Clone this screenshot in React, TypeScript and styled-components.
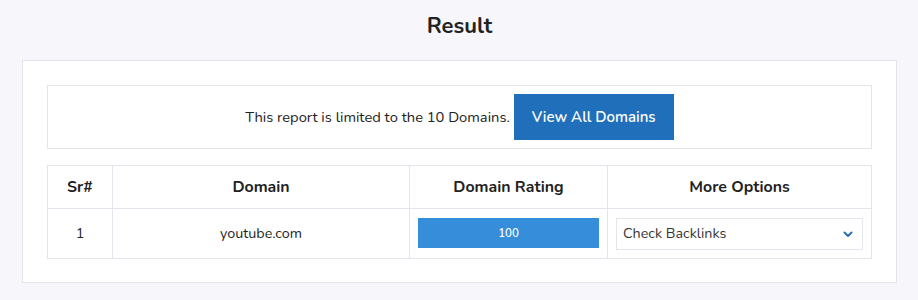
import React from "react";
import styled, { createGlobalStyle } from "styled-components";

const GlobalStyle = createGlobalStyle`
  html, body {
    margin: 0;
    padding: 0;
    background: #f7f7fb;
    font-family: "Nunito", "Open Sans", sans-serif;
    color: #222;
  }
`;

const App = () => {
  return (
    <>
      <GlobalStyle />
      <Page>
        <Title>Result</Title>
        <Card>
          <Notice>
            <NoticeText>This report is limited to the 10 Domains.</NoticeText>
            <Button>View All Domains</Button>
          </Notice>
          <Table>
            <colgroup>
              <col style={{ width: 65 }} />
              <col style={{ width: 297 }} />
              <col style={{ width: 198 }} />
              <col />
            </colgroup>
            <thead>
              <tr>
                <Th>Sr#</Th>
                <Th>Domain</Th>
                <Th>Domain Rating</Th>
                <Th>More Options</Th>
              </tr>
            </thead>
            <tbody>
              <tr>
                <Td>1</Td>
                <Td>youtube.com</Td>
                <Td>
                  <Bar>100</Bar>
                </Td>
                <Td>
                  <Select>
                    <span>Check Backlinks</span>
                    <svg width="12" height="12" viewBox="0 0 12 12">
                      <path
                        d="M2.5 4.5 L6 8 L9.5 4.5"
                        fill="none"
                        stroke="#2a6fb8"
                        strokeWidth="2"
                        strokeLinecap="round"
                        strokeLinejoin="round"
                      />
                    </svg>
                  </Select>
                </Td>
              </tr>
            </tbody>
          </Table>
        </Card>
      </Page>
    </>
  );
};

export default App;

const Page = styled.div`
  padding: 11px 21px 18px 22px;
`;
const Title = styled.h2`
  margin: 0;
  height: 49px;
  line-height: 30px;
  text-align: center;
  font-size: 22px;
  font-weight: 700;
  color: #222;
`;
const Card = styled.div`
  background: #fff;
  border: 1px solid #e4e4ec;
  padding: 24px 24px 23px 24px;
`;
const Notice = styled.div`
  border: 1px solid #e4e4ec;
  height: 62px;
  display: flex;
  align-items: center;
  justify-content: center;
  gap: 4px;
  margin-bottom: 16px;
`;
const NoticeText = styled.span`
  font-size: 14.7px;
  color: #222;
`;
const Button = styled.button`
  background: #1f6fba;
  color: #fff;
  border: none;
  font-family: inherit;
  font-size: 15px;
  font-weight: 600;
  width: 160px;
  height: 46px;
  padding: 0;
`;
const Table = styled.table`
  width: 100%;
  border-collapse: collapse;
  table-layout: fixed;
`;
const Th = styled.th`
  border: 1px solid #e4e4ec;
  height: 42px;
  padding: 0 8px;
  font-size: 15.9px;
  font-weight: 700;
  color: #222;
`;
const Td = styled.td`
  border: 1px solid #e4e4ec;
  height: 49px;
  padding: 0 8px;
  text-align: center;
  font-size: 14.3px;
  color: #222;
`;
const Bar = styled.div`
  background: #368edb;
  color: #fff;
  height: 30px;
  line-height: 30px;
  font-size: 11.5px;
  font-weight: 600;
  text-align: center;
  margin-top: -1px;
`;
const Select = styled.div`
  border: 1px solid #e4e4ec;
  height: 30px;
  display: flex;
  align-items: center;
  justify-content: space-between;
  padding: 0 8px 0 6px;
  color: #333;
  text-align: left;
`;
